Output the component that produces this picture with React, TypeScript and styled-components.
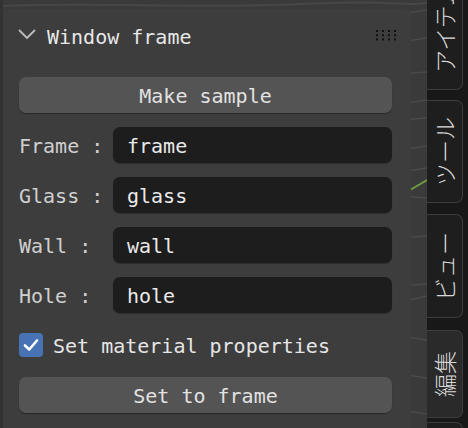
import React from "react";
import styled, { createGlobalStyle } from "styled-components";

const Global = createGlobalStyle`
  html, body { margin: 0; padding: 0; background: #393939; }
  body {
    width: 468px; height: 428px; overflow: hidden;
    font-family: "DejaVu Sans Mono", "Liberation Mono", monospace;
  }
  * { box-sizing: border-box; }
`;

const Root = styled.div`
  display: flex;
  width: 468px;
  height: 428px;
  overflow: hidden;
`;

const Viewport = styled.div`
  position: relative;
  flex: 0 0 427px;
  height: 428px;
  padding: 9px 16px 0 3px;
  background: #3a3a3a;
  overflow: hidden;
`;

const Backdrop = styled.svg`
  position: absolute;
  inset: 0;
  width: 427px;
  height: 428px;
`;

const Panel = styled.section`
  position: relative;
  width: 408px;
  height: 440px;
  background: #3d3d3d;
  border-radius: 6px 6px 0 0;
  padding: 16px 19px 0 16px;
  display: flex;
  flex-direction: column;
`;

const Header = styled.div`
  display: flex;
  align-items: center;
  height: 24px;
`;

const Chevron = styled.svg`
  width: 20px;
  height: 12px;
  margin-left: -2px;
  margin-top: -6px;
  flex: none;
`;

const Title = styled.span`
  margin-left: 10px;
  font-size: 20px;
  line-height: 24px;
  color: #e8e8e8;
  white-space: nowrap;
`;

const Grip = styled.svg`
  margin-left: auto;
  margin-right: -5px;
  margin-top: -4px;
  width: 22px;
  height: 12px;
  flex: none;
`;

const Body = styled.div`
  margin-top: 28px;
  display: flex;
  flex-direction: column;
  gap: 14px;
`;

const Button = styled.div`
  height: 36px;
  padding-top: 2px;
  border-radius: 7px;
  background: #545454;
  box-shadow: 0 1px 1px rgba(0, 0, 0, 0.35);
  color: #e2e2e2;
  font-size: 20px;
  display: flex;
  align-items: center;
  justify-content: center;
  white-space: nowrap;
`;

const FieldRow = styled.div`
  display: grid;
  grid-template-columns: 94px 1fr;
  align-items: center;
  height: 36px;
`;

const Label = styled.span`
  padding-top: 2px;
  font-size: 20px;
  color: #d0d0d0;
  white-space: nowrap;
`;

const Input = styled.div`
  height: 36px;
  padding: 2px 0 0 14px;
  border-radius: 7px;
  background: #1d1d1d;
  box-shadow: 0 1px 1px rgba(0, 0, 0, 0.25);
  display: flex;
  align-items: center;
  font-size: 20px;
  color: #eaeaea;
`;

const CheckRow = styled.div`
  display: flex;
  align-items: center;
  gap: 10px;
  height: 36px;
`;

const CheckBox = styled.div`
  width: 24px;
  height: 24px;
  border-radius: 4px;
  background: #4772b3;
  display: flex;
  align-items: center;
  justify-content: center;
  flex: none;
`;

const CheckText = styled.span`
  padding-top: 2px;
  font-size: 20px;
  color: #e6e6e6;
  white-space: nowrap;
`;

const TabBar = styled.nav`
  flex: 0 0 41px;
  height: 428px;
  background: #181818;
  display: flex;
  flex-direction: column;
  align-items: flex-start;
  overflow: hidden;
`;

const Tab = styled.div<{ $h: number; $mt: number; $active?: boolean }>`
  flex: none;
  width: 36px;
  height: ${(p) => p.$h}px;
  margin-top: ${(p) => p.$mt}px;
  background: ${(p) => (p.$active ? "#2a2a2a" : "#1e1e1e")};
  border: 1px solid #3d3d3d;
  border-left: none;
  border-radius: 0 7px 7px 0;
  display: flex;
  align-items: center;
  justify-content: center;
`;

const TabLabel = styled.span`
  writing-mode: vertical-rl;
  text-orientation: sideways;
  transform: rotate(180deg);
  font-family: "Noto Sans CJK JP", "Noto Sans", sans-serif;
  font-weight: 300;
  font-size: 23px;
  line-height: 1;
  color: #d8d8d8;
  white-space: nowrap;
`;

const gridLines: [number, number, number, number][] = [
  [400, 14, 427, 10],
  [400, 42, 427, 38],
  [400, 74, 427, 72],
  [400, 104, 427, 100],
  [400, 120, 427, 118],
  [400, 150, 427, 146],
  [400, 172, 427, 168],
  [400, 196, 427, 198],
  [400, 238, 427, 236],
  [400, 286, 427, 284],
  [400, 302, 427, 296],
  [400, 336, 427, 340],
  [400, 374, 427, 378],
  [400, 410, 427, 414],
];

const fields = [
  ["Frame :", "frame"],
  ["Glass :", "glass"],
  ["Wall :", "wall"],
  ["Hole :", "hole"],
];

export default function App() {
  return (
    <>
      <Global />
      <Root>
        <Viewport>
          <Backdrop viewBox="0 0 427 428">
            <path d="M0 6 C100 2 200 9 300 4 S 400 7 427 3" stroke="#474747" strokeWidth="2" fill="none" />
            {gridLines.map(([x1, y1, x2, y2], i) => (
              <line key={i} x1={x1} y1={y1} x2={x2} y2={y2} stroke="#4a4a4a" strokeWidth="1.5" />
            ))}
            <line x1="410" y1="190" x2="427" y2="180" stroke="#6f9a3e" strokeWidth="2" />
            <rect x="0" y="0" width="3" height="428" fill="#333333" />
          </Backdrop>
          <Panel>
            <Header>
              <Chevron viewBox="0 0 20 12">
                <path d="M2 2 L10 10 L18 2" stroke="#bdbdbd" strokeWidth="1.8" fill="none" />
              </Chevron>
              <Title>Window frame</Title>
              <Grip viewBox="0 0 22 12">
                {[0, 1, 2, 3].map((c) =>
                  [0, 1, 2].map((r) => (
                    <rect key={`${c}-${r}`} x={1 + c * 6} y={1 + r * 4.2} width="2" height="2" fill="#111" />
                  ))
                )}
              </Grip>
            </Header>
            <Body>
              <Button>Make sample</Button>
              {fields.map(([l, v]) => (
                <FieldRow key={l}>
                  <Label>{l}</Label>
                  <Input>{v}</Input>
                </FieldRow>
              ))}
              <CheckRow>
                <CheckBox>
                  <svg width="18" height="18" viewBox="0 0 18 18">
                    <path d="M3 9.5 L7.2 13.5 L15 4.5" stroke="#ffffff" strokeWidth="2.6" fill="none" strokeLinecap="round" strokeLinejoin="round" />
                  </svg>
                </CheckBox>
                <CheckText>Set material properties</CheckText>
              </CheckRow>
              <Button>Set to frame</Button>
            </Body>
          </Panel>
        </Viewport>
        <TabBar>
          <Tab $h={124} $mt={-34}>
            <TabLabel>アイテム</TabLabel>
          </Tab>
          <Tab $h={103} $mt={10}>
            <TabLabel>ツール</TabLabel>
          </Tab>
          <Tab $h={104} $mt={11}>
            <TabLabel>ビュー</TabLabel>
          </Tab>
          <Tab $h={88} $mt={12} $active>
            <TabLabel>編集</TabLabel>
          </Tab>
          <Tab $h={60} $mt={4} />
        </TabBar>
      </Root>
    </>
  );
}
